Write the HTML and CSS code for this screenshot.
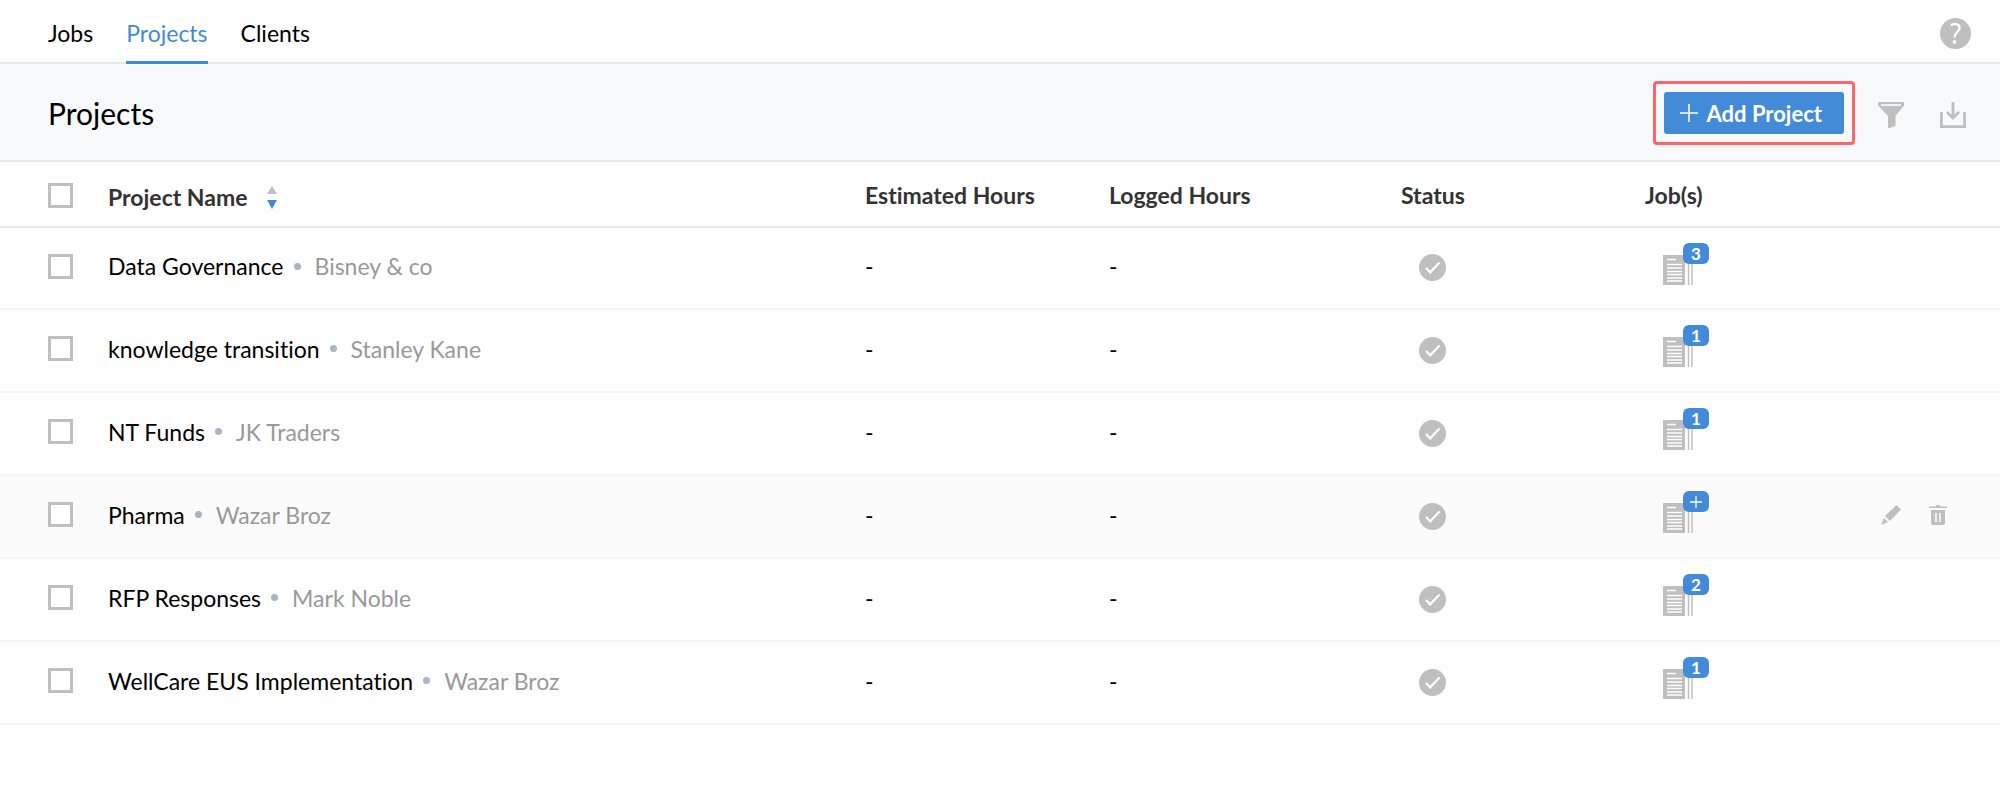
FILE: index.html
```html
<!DOCTYPE html>
<html lang="en">
<head>
    <meta charset="UTF-8">
    <meta name="viewport" content="width=device-width, initial-scale=1.0">
    <title>Projects</title>
    <link rel="stylesheet" href="styles.css">
</head>
<body>
    <!-- Icon sprite -->
    <svg class="sprite" aria-hidden="true">
        <symbol id="icon-check" viewBox="0 0 27 27">
            <circle cx="13.5" cy="13.5" r="13.5" fill="#bfbfbf"/>
            <path d="M7 14l4.200 4.300L20.500 8.500" fill="none" stroke="#fff" stroke-width="2.200"/>
        </symbol>
        <symbol id="icon-jobs" viewBox="0 0 30 30">
            <path d="M0 0h22v30H0z" fill="#bfbfbf"/>
            <path d="M4 4.500h9M4 9.500h15M4 13h15M4 16.500h15M4 19.500h15M4 23h15M4 26h15" stroke="#fff" stroke-width="1.400"/>
            <path d="M25.500 0v30M29 0v30" stroke="#bfbfbf" stroke-width="1.500"/>
        </symbol>
    </svg>

    <nav class="tabs">
        <a href="#" class="tab">Jobs</a>
        <a href="#" class="tab active">Projects</a>
        <a href="#" class="tab">Clients</a>
        <button type="button" class="icon-btn help-btn" aria-label="Help">
            <svg width="31" height="31" viewBox="0 0 31 31">
                <circle cx="15.5" cy="15.5" r="15.5" fill="#bfbfbf"/>
                <path d="M11 7.500C13 5.500 19.500 5 19.500 10c0 4-5 4.200-5 9.500" fill="none" stroke="#fff" stroke-width="2.400"/>
                <circle cx="14.500" cy="24" r="1.900" fill="#fff"/>
            </svg>
        </button>
    </nav>

    <header class="page-header">
        <h1>Projects</h1>
        <div class="highlight">
            <button type="button" class="btn-add">
                <svg width="18" height="18" viewBox="0 0 18 18">
                    <path d="M9 0v18M0 9h18" stroke="#fff" stroke-width="1.600"/>
                </svg>
                <span>Add Project</span>
            </button>
        </div>
        <div class="header-actions">
            <button type="button" class="icon-btn" aria-label="Filter">
                <svg width="26" height="26" viewBox="0 0 26 26" fill="#bfbfbf">
                    <path d="M0 0h26v3.500L17.500 14v10l-7.500 2.500V14L0 3.500z"/>
                    <path d="M3 3h20" stroke="#fff" stroke-width="1.600"/>
                </svg>
            </button>
            <button type="button" class="icon-btn" aria-label="Export">
                <svg width="26" height="26" viewBox="0 0 26 26" fill="none" stroke="#bfbfbf" stroke-width="2.800">
                    <path d="M1.400 10v14.600h23.200V10M13 0v16M7 10l6 6 6-6"/>
                </svg>
            </button>
        </div>
    </header>

    <table class="projects">
        <thead>
            <tr>
                <th class="col-check"><input type="checkbox" aria-label="Select all projects"></th>
                <th class="col-name">
                    <button type="button" class="sort-btn">
                        Project Name
                        <svg width="10" height="23" viewBox="0 0 10 23">
                            <path d="M5 0l5 8H0z" fill="#bfbfbf"/>
                            <path d="M5 23l5-9H0z" fill="#438bd9"/>
                        </svg>
                    </button>
                </th>
                <th class="col-estimated">Estimated Hours</th>
                <th class="col-logged">Logged Hours</th>
                <th class="col-status">Status</th>
                <th class="col-jobs">Job(s)</th>
                <th class="col-actions"></th>
            </tr>
        </thead>
        <tbody>
            <tr>
                <td class="col-check"><input type="checkbox" aria-label="Select Data Governance"></td>
                <td><div class="project">Data Governance <span class="client">Bisney &amp; co</span></div></td>
                <td>-</td>
                <td>-</td>
                <td><svg class="status-icon"><use href="#icon-check"/></svg></td>
                <td><div class="jobs"><svg><use href="#icon-jobs"/></svg><span class="badge">3</span></div></td>
                <td></td>
            </tr>
            <tr>
                <td class="col-check"><input type="checkbox" aria-label="Select knowledge transition"></td>
                <td><div class="project">knowledge transition <span class="client">Stanley Kane</span></div></td>
                <td>-</td>
                <td>-</td>
                <td><svg class="status-icon"><use href="#icon-check"/></svg></td>
                <td><div class="jobs"><svg><use href="#icon-jobs"/></svg><span class="badge">1</span></div></td>
                <td></td>
            </tr>
            <tr>
                <td class="col-check"><input type="checkbox" aria-label="Select NT Funds"></td>
                <td><div class="project">NT Funds <span class="client">JK Traders</span></div></td>
                <td>-</td>
                <td>-</td>
                <td><svg class="status-icon"><use href="#icon-check"/></svg></td>
                <td><div class="jobs"><svg><use href="#icon-jobs"/></svg><span class="badge">1</span></div></td>
                <td></td>
            </tr>
            <tr class="hovered">
                <td class="col-check"><input type="checkbox" aria-label="Select Pharma"></td>
                <td><div class="project">Pharma <span class="client">Wazar Broz</span></div></td>
                <td>-</td>
                <td>-</td>
                <td><svg class="status-icon"><use href="#icon-check"/></svg></td>
                <td>
                    <div class="jobs">
                        <svg><use href="#icon-jobs"/></svg>
                        <button type="button" class="badge" aria-label="Add job">
                            <svg class="plus" viewBox="0 0 12 12"><path d="M6 0v12M0 6h12" stroke="#fff" stroke-width="1.300"/></svg>
                        </button>
                    </div>
                </td>
                <td>
                    <div class="row-actions">
                        <button type="button" class="icon-btn" aria-label="Edit">
                            <svg width="20" height="20" viewBox="0 0 20 20" fill="#bfbfbf">
                                <path d="M15.500 0L20 4.500 9 16l-5-5zM3 13l4 4-7 3z"/>
                            </svg>
                        </button>
                        <button type="button" class="icon-btn" aria-label="Delete">
                            <svg width="18" height="20" viewBox="0 0 18 20">
                                <path d="M7 0h4v1.500h7V3H0V1.500h7zM2 5h14v13.500l-1.500 1.500h-11L2 18.500z" fill="#bfbfbf"/>
                                <path d="M7 8v9M11 8v9" stroke="#fff" stroke-width="1.600"/>
                            </svg>
                        </button>
                    </div>
                </td>
            </tr>
            <tr>
                <td class="col-check"><input type="checkbox" aria-label="Select RFP Responses"></td>
                <td><div class="project">RFP Responses <span class="client">Mark Noble</span></div></td>
                <td>-</td>
                <td>-</td>
                <td><svg class="status-icon"><use href="#icon-check"/></svg></td>
                <td><div class="jobs"><svg><use href="#icon-jobs"/></svg><span class="badge">2</span></div></td>
                <td></td>
            </tr>
            <tr>
                <td class="col-check"><input type="checkbox" aria-label="Select WellCare EUS Implementation"></td>
                <td><div class="project">WellCare EUS Implementation <span class="client">Wazar Broz</span></div></td>
                <td>-</td>
                <td>-</td>
                <td><svg class="status-icon"><use href="#icon-check"/></svg></td>
                <td><div class="jobs"><svg><use href="#icon-jobs"/></svg><span class="badge">1</span></div></td>
                <td></td>
            </tr>
        </tbody>
    </table>
</body>
</html>
```

FILE: styles.css
```css
:root {
    --primary-color: #438bd9;
    --highlight-color: #ff6568;
    --icon-gray: #bfbfbf;
    --text-gray: #999;
    --border-color: #e7e8e9;
    --row-border: #f5f5f5;
}

* {
    box-sizing: border-box;
}

body {
    margin: 0;
    font-family: Lato, sans-serif;
    font-size: 23px;
    font-variant-ligatures: none;
    color: #000;
    background-color: #fefefe;
}

button {
    font: inherit;
    color: inherit;
    background: none;
    border: none;
    padding: 0;
    cursor: pointer;
}

svg {
    display: block;
}

.sprite {
    position: absolute;
    width: 0;
    height: 0;
}

/* Top tabs */
.tabs {
    display: flex;
    align-items: stretch;
    gap: 33px;
    height: 64px;
    padding: 0 29px 0 48px;
    border-bottom: 2px solid var(--border-color);
}

.tab {
    display: flex;
    align-items: center;
    height: 64px;
    padding-top: 5px;
    color: #000;
    text-decoration: none;
    border-bottom: 3px solid transparent;
}

.tab.active {
    color: var(--primary-color);
    border-bottom-color: var(--primary-color);
}

.help-btn {
    margin-left: auto;
    padding-top: 5px;
}

/* Page header */
.page-header {
    display: flex;
    align-items: center;
    height: 98px;
    padding: 2px 34px 0 48px;
    background-color: #f8f9fb;
    border-bottom: 2px solid var(--border-color);
}

h1 {
    margin: 0;
    font-size: 30px;
    font-weight: 400;
}

.highlight {
    margin-left: auto;
    padding: 8px;
    border: 3px solid var(--highlight-color);
    border-radius: 4px;
}

.btn-add {
    display: flex;
    align-items: center;
    gap: 9px;
    height: 42px;
    padding: 0 22px 0 16px;
    color: #fff;
    font-size: 22px;
    font-weight: 700;
    background-color: var(--primary-color);
    border-radius: 3px;
}

.header-actions {
    display: flex;
    gap: 36px;
    margin-left: 23px;
    padding-top: 4px;
}

/* Projects table */
.projects {
    width: 100%;
    table-layout: fixed;
    border-collapse: separate;
    border-spacing: 0;
}

.projects th,
.projects td {
    padding: 0;
    text-align: left;
    vertical-align: middle;
}

.projects th {
    height: 66px;
    padding-top: 2px;
    color: #333;
    font-size: 23px;
    font-weight: 700;
    border-bottom: 2px solid var(--border-color);
}

.projects td {
    height: 83px;
    padding-bottom: 4px;
    border-bottom: 2px solid var(--row-border);
}

.projects tbody tr:first-child td {
    height: 82px;
}

.col-check {
    width: 108px;
}

.projects .col-check {
    padding-left: 48px;
}

.col-estimated,
.col-status {
    width: 12.2%;
}

.col-logged {
    width: 14.6%;
}

.col-jobs {
    width: 11.8%;
}

.col-actions {
    width: 119px;
}

.hovered {
    background-color: #fbfbfb;
}

input[type="checkbox"] {
    display: block;
    appearance: none;
    width: 25px;
    height: 25px;
    margin: 0;
    border: 3px solid var(--icon-gray);
    background-color: #fff;
}

input[type="checkbox"]:checked {
    background-color: var(--primary-color);
}

.sort-btn {
    display: flex;
    align-items: center;
    gap: 19px;
    padding-top: 4px;
}

.project {
    display: flex;
    align-items: center;
}

.client {
    display: flex;
    align-items: center;
    color: var(--text-gray);
}

.client::before {
    content: "";
    width: 7px;
    height: 7px;
    margin: 0 14px 0 10px;
    border-radius: 50%;
    background-color: #a9b5c4;
}

.status-icon {
    width: 27px;
    height: 27px;
    margin: 3px 0 0 18px;
}

.jobs {
    position: relative;
    width: 30px;
    margin-left: 18px;
    padding-top: 7px;
}

.jobs svg {
    width: 30px;
    height: 30px;
}

.badge {
    position: absolute;
    top: -5px;
    left: 20px;
    display: flex;
    align-items: center;
    justify-content: center;
    width: 26px;
    height: 21px;
    color: #fff;
    font-size: 17px;
    font-weight: 700;
    border-radius: 6px;
    background-color: var(--primary-color);
}

.jobs .badge .plus {
    width: 12px;
    height: 12px;
}

.row-actions {
    display: flex;
    gap: 28px;
}
```
